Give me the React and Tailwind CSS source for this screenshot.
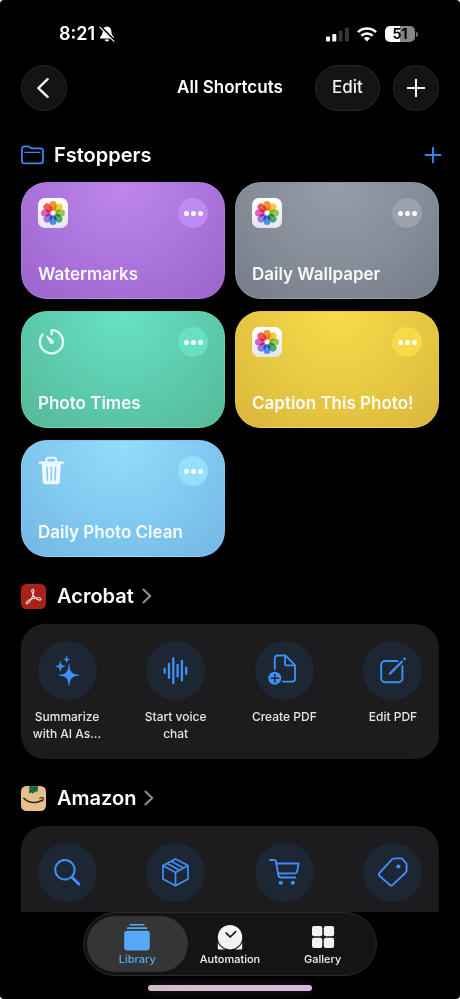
import React, { useState } from 'react';

const shortcuts = [
    { name: "Watermarks", icon: "photos", bg: "bg-[radial-gradient(circle_at_top,#bf86f0,#ab73dc_55%,#9b64cb)]", dot: "bg-[#bf8bf0]" },
    { name: "Daily Wallpaper", icon: "photos", bg: "bg-[radial-gradient(circle_at_top,#969ea8,#848d98_55%,#737c88)]", dot: "bg-[#9aa2ad]" },
    { name: "Photo Times", icon: "timer", bg: "bg-[radial-gradient(circle_at_top,#67e2c3,#5dcbad_55%,#55b999)]", dot: "bg-[#67e0c3]" },
    { name: "Caption This Photo!", icon: "photos", bg: "bg-[radial-gradient(circle_at_top,#f8dc49,#e7c842_55%,#d9b63e)]", dot: "bg-[#f8da48]" },
    { name: "Daily Photo Clean", icon: "trash", bg: "bg-[radial-gradient(circle_at_top,#93ddfb,#81c9f0_55%,#73b7e4)]", dot: "bg-[#95dffc]" },
];

const petals = ["#f08a1d", "#f7c52e", "#8cc63a", "#3f9f6b", "#3d84ee", "#8a6fe0", "#e34fb0", "#ee4a4f"];

const PhotosIcon = () => (
    <svg viewBox="0 0 30 30" className="w-[30px] h-[30px]">
        <defs>
            <linearGradient id="tile" x1="0" y1="0" x2="0" y2="1">
                <stop offset="0" stopColor="#ffffff" />
                <stop offset="1" stopColor="#e6e6ea" />
            </linearGradient>
        </defs>
        <rect width="30" height="30" rx="7" fill="url(#tile)" />
        <g style={{ isolation: "isolate" }}>
            {petals.map((color, i) => (
                <rect key={color} x="11.5" y="3" width="7" height="9.7" rx="3.5" fill={color} opacity="0.9"
                      transform={`rotate(${i * 45} 15 15)`} style={{ mixBlendMode: "multiply" }} />
            ))}
        </g>
        <circle cx="15" cy="15" r="2" fill="#fff" />
    </svg>
);

const TimerIcon = () => (
    <svg viewBox="0 0 30 30" className="w-[30px] h-[30px]" fill="none" stroke="#e4faf4" strokeWidth="2.3" strokeLinecap="round" strokeLinejoin="round">
        <path d="M13.6 7.4V3.2A11.6 11.6 0 1 1 4.6 7.3" />
        <path d="M8.2 9.2Q7.6 8.2 8.9 8.6L14.9 13A2.2 2.2 0 1 1 11.9 15.9Z" fill="#e4faf4" stroke="none" />
    </svg>
);

const TrashIcon = () => (
    <svg viewBox="0 0 30 30" className="w-[30px] h-[30px]" fill="none" stroke="#eef9ff" strokeLinecap="round">
        <path d="M1.8 6.7H24.8" strokeWidth="2.2" />
        <path d="M8.3 6V3.6A2 2 0 0 1 10.3 1.7H16.1A2 2 0 0 1 18.1 3.6V6" strokeWidth="1.9" />
        <path d="M3.8 7.5H22.8L21.8 26A2.6 2.6 0 0 1 19.2 28.3H7.4A2.6 2.6 0 0 1 4.8 26Z" fill="#eef9ff" stroke="none" />
        <path d="M9 11.5 9.5 24.2M13.3 11.5V24.2M17.6 11.5 17.1 24.2" stroke="#82cbf2" strokeWidth="1.5" />
    </svg>
);

const cardIcons = { photos: PhotosIcon, timer: TimerIcon, trash: TrashIcon };

// 59x59 drawings that sit in the round action buttons
const Glyph = ({ children }) => (
    <svg viewBox="0 0 59 59" className="w-[59px] h-[59px]" fill="none" stroke="#3f8ff7" strokeWidth="1.9" strokeLinecap="round" strokeLinejoin="round">
        {children}
    </svg>
);

const SparklesGlyph = () => (
    <Glyph>
        <g fill="#3f8ff7" stroke="#3f8ff7" strokeWidth=".6">
            <path d="M31 24C31.8 31 33.5 33.2 41 34.2 33.5 35.2 31.8 37.4 31 44.5 30.2 37.4 28.5 35.2 21 34.2 28.5 33.2 30.2 31 31 24Z" />
            <path d="M22.4 20.5C22.9 23.8 23.7 24.8 27.2 25.3 23.7 25.8 22.9 26.8 22.4 30.2 21.9 26.8 21.1 25.8 17.6 25.3 21.1 24.8 21.9 23.8 22.4 20.5Z" />
            <path d="M28.7 15.4C29 17.4 29.6 18 31.6 18.4 29.6 18.8 29 19.4 28.7 21.4 28.4 19.4 27.8 18.8 25.8 18.4 27.8 18 28.4 17.4 28.7 15.4Z" />
        </g>
    </Glyph>
);

const WaveGlyph = () => (
    <Glyph>
        <path strokeWidth="2.3" d="M18.7 27.8V31.8M23 22.8V36.8M27.3 17.4V42.2M31.6 23.8V35.6M35.9 20V39.4M40.2 26.6V32.8" />
    </Glyph>
);

const CreateGlyph = () => (
    <Glyph>
        <path d="M19.8 28V17.3A2.8 2.8 0 0 1 22.6 14.5H30.4L40 24.1V37.8A2.8 2.8 0 0 1 37.2 40.6H28" />
        <path d="M30 15V22.4A2 2 0 0 0 32 24.4H39.5" />
        <circle cx="19.8" cy="37.2" r="6.5" fill="#3f8ff7" stroke="none" />
        <path d="M16.1 37.2H23.5M19.8 33.5V40.9" stroke="#1d2733" strokeWidth="1.5" />
    </Glyph>
);

const EditGlyph = () => (
    <Glyph>
        <path d="M34.5 20H22.2A4 4 0 0 0 18.2 24V37.2A4 4 0 0 0 22.2 41.2H35.4A4 4 0 0 0 39.4 37.2V25" />
        <path d="M27 32.6 38.8 20.8" strokeWidth="2.3" />
        <path d="M41.4 18.2 41.6 18" strokeWidth="2.6" />
    </Glyph>
);

const SearchGlyph = () => (
    <Glyph>
        <circle cx="26.9" cy="26.8" r="9.7" strokeWidth="2" />
        <path d="M34.3 34.4 40.8 41" strokeWidth="2.9" />
    </Glyph>
);

const BoxGlyph = () => (
    <Glyph>
        <path d="M29.5 16 42 22.6V36L29.5 42.8 17 36V22.6ZM17.3 22.8 29.5 29.5 41.7 22.8M29.5 29.5V42.5M25.4 18.3 37.4 25M21.4 20.4 33.4 27.2" strokeWidth="1.7" />
    </Glyph>
);

const CartGlyph = () => (
    <Glyph>
        <path d="M15 17H19.6Q20.7 17 20.9 18.2L23.4 32.3Q23.8 34.5 25.8 34.5H40.2" />
        <path d="M21.4 20.5H43.6L42.1 28.6Q41.8 30.3 40 30.4L23.2 30.5" />
        <circle cx="25.8" cy="39.8" r="2.1" fill="#3f8ff7" stroke="none" />
        <circle cx="37.8" cy="39.8" r="2.1" fill="#3f8ff7" stroke="none" />
    </Glyph>
);

const TagGlyph = () => (
    <Glyph>
        <path d="M29.2 16.2Q30.4 15.4 31.8 15.4H37.7Q38.8 15.4 39.6 16.2L42.8 20Q43.6 20.8 43.6 22V27Q43.6 28.6 42.5 29.7L29.7 41.9Q28.2 43.3 26.8 41.9L16.7 33Q15.2 31.6 16.6 29.8Z" />
        <circle cx="35.4" cy="23.5" r="2.1" fill="#3f8ff7" stroke="none" />
    </Glyph>
);

const AcrobatLogo = () => (
    <svg viewBox="0 0 25 25" className="w-[25px] h-[25px]">
        <rect width="25" height="25" rx="5.5" fill="#a8221a" />
        <path d="M5.2 18.7C5.6 16.4 9.6 15 12.8 14.2 16 13.5 19.8 13.5 20 15.2 20.1 17 16.3 16.2 14.1 13.6 12.1 11.4 10.4 7.5 10.8 6 11.2 4.8 12.9 5 12.8 7.2 12.7 10.4 10.6 14.4 8.9 17.1 7.5 19.4 5.3 20.5 5.2 18.7Z"
              fill="none" stroke="#f6dcd9" strokeWidth="1.1" strokeLinejoin="round" />
    </svg>
);

const AmazonLogo = () => (
    <svg viewBox="0 0 25 25" className="w-[25px] h-[25px]">
        <rect width="25" height="25" rx="5.5" fill="#e6bf8b" />
        <path d="M8.2 0H17V5.2L15.4 6.6 13.8 5.8 12.2 7.8 10.4 6.8 8.2 7.6Z" fill="#2f8a5b" />
        <path d="M8.4 3.2 11 .4M8.4 6.4 14 .6M11.4 6.6 16.6 1.2" stroke="#123c2b" strokeWidth="1.1" />
        <path d="M2.8 12.3C7.5 17.4 15.8 17.9 21 14.2" fill="none" stroke="#26251f" strokeWidth="1.5" strokeLinecap="round" />
        <path d="M18.7 12.2C20.4 11.5 22 11.5 22.3 12 22.5 12.7 22 14.2 21.3 15.2" fill="none" stroke="#26251f" strokeWidth="1.1" strokeLinecap="round" />
    </svg>
);

const apps = [
    {
        name: "Acrobat",
        Logo: AcrobatLogo,
        actions: [
            { label: "Summarize with AI As...", Icon: SparklesGlyph },
            { label: "Start voice chat", Icon: WaveGlyph },
            { label: "Create PDF", Icon: CreateGlyph },
            { label: "Edit PDF", Icon: EditGlyph },
        ],
    },
    {
        name: "Amazon",
        Logo: AmazonLogo,
        actions: [
            { name: "Search", Icon: SearchGlyph },
            { name: "Orders", Icon: BoxGlyph },
            { name: "Cart", Icon: CartGlyph },
            { name: "Deals", Icon: TagGlyph },
        ],
    },
];

const LibraryIcon = () => (
    <svg viewBox="0 0 28 28" className="w-7 h-7" fill="currentColor">
        <rect x="6.4" y="1" width="15.2" height="1.5" rx=".7" />
        <rect x="3.8" y="4.3" width="20.4" height="1.7" rx=".8" />
        <rect x="1.2" y="7.8" width="25.6" height="19.6" rx="3.2" />
    </svg>
);

const AutomationIcon = () => (
    <svg viewBox="0 0 28 28" className="w-7 h-7" fill="currentColor">
        <path d="M1.8 19.4 9.2 26.6H2.6A.8.8 0 0 1 1.8 25.8ZM26.2 19.4 18.8 26.6H25.4A.8.8 0 0 0 26.2 25.8Z" />
        <circle cx="14" cy="14.2" r="13.2" fill="#141414" />
        <circle cx="14" cy="14.2" r="12.2" />
        <path d="M10.2 10.2 14.2 14 19.6 8.6" fill="none" stroke="#141414" strokeWidth="1.7" strokeLinecap="round" strokeLinejoin="round" />
    </svg>
);

const GalleryIcon = () => (
    <svg viewBox="0 0 28 28" className="w-7 h-7" fill="currentColor">
        <rect x="3" y="3" width="10.3" height="10.3" rx="2" />
        <rect x="14.8" y="3" width="10.3" height="10.3" rx="2" />
        <rect x="3" y="14.8" width="10.3" height="10.3" rx="2" />
        <rect x="14.8" y="14.8" width="10.3" height="10.3" rx="2" />
    </svg>
);

const tabs = [
    { name: "Library", Icon: LibraryIcon },
    { name: "Automation", Icon: AutomationIcon },
    { name: "Gallery", Icon: GalleryIcon },
];

const StatusBar = () => (
    <div className="flex items-center justify-between pt-6 pl-[59px] pr-[42px]">
        <div className="flex items-center gap-1 h-5">
            <span className="text-lg leading-5 font-semibold">8:21</span>
            <svg viewBox="0 0 16 16" className="w-4 h-4">
                <path d="M8 .6C4.9.8 3.7 3 3.6 5.6 3.5 8.6 2.7 9.4 1.4 10.8.7 11.7 1 12.6 2 12.6H14C15 12.6 15.3 11.7 14.6 10.8 13.3 9.4 12.5 8.6 12.4 5.6 12.3 3 11.1.8 8 .6ZM5.7 13.6C6 14.8 6.8 15.6 8 15.6S10 14.8 10.3 13.6Z" fill="#fff" />
                <path d="M1.6.8 15.8 15" stroke="#000" strokeWidth="2.4" />
                <path d="M.8 1.2 15 15.4" stroke="#fff" strokeWidth="1.1" strokeLinecap="round" />
            </svg>
        </div>
        <div className="flex items-center gap-2 h-5">
            <svg viewBox="0 0 23 15" className="w-[23px] h-[15px]">
                <rect x="0" y="9.4" width="4" height="5.2" rx="1.2" fill="#fff" />
                <rect x="6.3" y="7" width="4" height="7.6" rx="1.2" fill="#fff" />
                <rect x="12.6" y="3.6" width="4" height="11" rx="1.2" fill="#363636" />
                <rect x="18.9" y=".4" width="4" height="14.2" rx="1.2" fill="#363636" />
            </svg>
            <svg viewBox="0 0 20 15" className="w-5 h-[15px]" fill="none" stroke="#fff" strokeWidth="2.5">
                <path d="M1 5.2C6 .4 14 .4 19 5.2M4.3 8.7C7.6 5.7 12.4 5.7 15.7 8.7" />
                <path d="M10 14.4 6.9 11.2C8.7 9.5 11.3 9.5 13.1 11.2Z" fill="#fff" stroke="none" />
            </svg>
            <div className="flex items-center gap-px">
                <span className="w-[30px] h-4 rounded-[5px] bg-linear-to-r from-white from-50% to-[#858585] to-50% text-black text-sm leading-4 font-bold text-center">51</span>
                <span className="w-[2px] h-[5px] rounded-r bg-[#6b6b6b]"></span>
            </div>
        </div>
    </div>
);

const ShortcutCard = ({ shortcut }) => {
    const Icon = cardIcons[shortcut.icon];
    return (
        <div className={`h-[117px] rounded-[26px] px-4 py-[15px] flex flex-col justify-between border border-white/10 ${shortcut.bg}`}>
            <div className="flex justify-between items-start">
                <Icon />
                <button aria-label={`Edit ${shortcut.name}`} className={`w-[30px] h-[30px] rounded-full flex items-center justify-center gap-[2px] ${shortcut.dot}`}>
                    <span className="w-[5px] h-[5px] rounded-full bg-white"></span>
                    <span className="w-[5px] h-[5px] rounded-full bg-white"></span>
                    <span className="w-[5px] h-[5px] rounded-full bg-white"></span>
                </button>
            </div>
            <h3 className="text-[17px] leading-[18px] font-semibold text-white/95 whitespace-nowrap">{shortcut.name}</h3>
        </div>
    );
};

const AppSection = ({ app }) => (
    <section>
        <a href="#" className="flex items-center h-[67px] pt-[11px]">
            <app.Logo />
            <h2 className="ml-[11px] text-xl font-semibold">{app.name}</h2>
            <svg viewBox="0 0 10 16" className="ml-2 w-[10px] h-4" fill="none" stroke="#8e8e93" strokeWidth="2.1" strokeLinecap="round" strokeLinejoin="round">
                <path d="M1.4 1.6 8.2 8 1.4 14.4" />
            </svg>
        </a>
        <div className="flex justify-between h-[135px] px-[10px] pt-[17px] rounded-3xl bg-[#1c1c1e]">
            {app.actions.map(({ label, name, Icon }) => (
                <button key={label || name} aria-label={label || name} className="w-[72px] flex flex-col items-center justify-start gap-2">
                    <span className="rounded-full bg-[#1d2733]"><Icon /></span>
                    {label && <span className="text-xs leading-[17px] font-medium text-[#e6e6e6]">{label}</span>}
                </button>
            ))}
        </div>
    </section>
);

const App = () => {
    const [active, setActive] = useState("Library");

    return (
        <div className="bg-white">
            <div className="h-screen flex flex-col overflow-hidden rounded-[4px] bg-black text-white font-['Inter','Liberation_Sans',sans-serif]">
                <StatusBar />
                <header className="grid grid-cols-[1fr_auto_1fr] items-center px-[21px] mt-[21px]">
                    <button aria-label="Back" className="w-[46px] h-[46px] rounded-full bg-[#141414] border border-[#262626] flex items-center justify-center">
                        <svg viewBox="0 0 20 20" className="w-5 h-5" fill="none" stroke="#f2f2f2" strokeWidth="2.4" strokeLinecap="round" strokeLinejoin="round">
                            <path d="M13.6 1.2 4.4 10.2 13.6 18.8" />
                        </svg>
                    </button>
                    <h1 className="text-[17px] font-semibold">All Shortcuts</h1>
                    <div className="flex justify-end gap-[13px]">
                        <button className="w-[65px] h-[46px] rounded-full bg-[#141414] border border-[#262626] text-[17px] font-medium text-[#f2f2f2]">Edit</button>
                        <button aria-label="New shortcut" className="w-[46px] h-[46px] rounded-full bg-[#141414] border border-[#262626] flex items-center justify-center">
                            <svg viewBox="0 0 20 20" className="w-5 h-5" fill="none" stroke="#f2f2f2" strokeWidth="2.1" strokeLinecap="round">
                                <path d="M10 1.8V18.2M1.8 10H18.2" />
                            </svg>
                        </button>
                    </div>
                </header>

                <main className="flex-1 min-h-0 overflow-hidden px-[21px] mt-1">
                    <section>
                        <div className="flex items-center h-[67px] pt-[13px]">
                            <svg viewBox="0 0 23 20" className="w-[23px] h-5" fill="none" stroke="#3a86ee" strokeWidth="1.8" strokeLinecap="round" strokeLinejoin="round">
                                <path d="M.9 4A2.6 2.6 0 0 1 3.5 1.4H6.8Q7.9 1.4 8.6 2.1L9.4 2.8Q10.1 3.4 11.2 3.4H19.4A2.6 2.6 0 0 1 22 6V15.8A2.6 2.6 0 0 1 19.4 18.4H3.5A2.6 2.6 0 0 1 .9 15.8Z" />
                                <path d="M4 7.4H18.8" strokeWidth="1.4" />
                            </svg>
                            <h2 className="ml-[10px] text-xl font-semibold">Fstoppers</h2>
                            <button aria-label="Add to Fstoppers" className="ml-auto -mr-1">
                                <svg viewBox="0 0 20 20" className="w-5 h-5" stroke="#3a86ee" strokeWidth="1.9" strokeLinecap="round">
                                    <path d="M10 2.6V17.4M2.6 10H17.4" />
                                </svg>
                            </button>
                        </div>
                        <div className="grid grid-cols-2 gap-x-[10px] gap-y-3">
                            {shortcuts.map((shortcut) => (
                                <ShortcutCard key={shortcut.name} shortcut={shortcut} />
                            ))}
                        </div>
                    </section>
                    {apps.map((app) => (
                        <AppSection key={app.name} app={app} />
                    ))}
                </main>

                <footer className="flex flex-col items-center pb-2">
                    <nav className="flex w-[294px] h-16 px-[7px] py-[3px] rounded-full bg-[#141414] border border-[#2a2a2a]">
                        {tabs.map(({ name, Icon }) => (
                            <button
                                key={name}
                                onClick={() => setActive(name)}
                                className={`flex-1 -mx-1 px-1 pt-[2px] flex flex-col items-center justify-center rounded-full ${active === name ? "bg-[#353535] text-[#55a9f8]" : "text-[#f2f2f2]"}`}
                            >
                                <Icon />
                                <span className="text-[11px] leading-4 font-medium">{name}</span>
                            </button>
                        ))}
                    </nav>
                    <div className="mt-[9px] w-[164px] h-[6px] rounded-full bg-linear-to-r from-[#d0bfc8] to-[#d3bcdb] shadow-[0_0_10px_rgba(190,120,170,0.25)]"></div>
                </footer>
            </div>
        </div>
    );
};

export default App;
